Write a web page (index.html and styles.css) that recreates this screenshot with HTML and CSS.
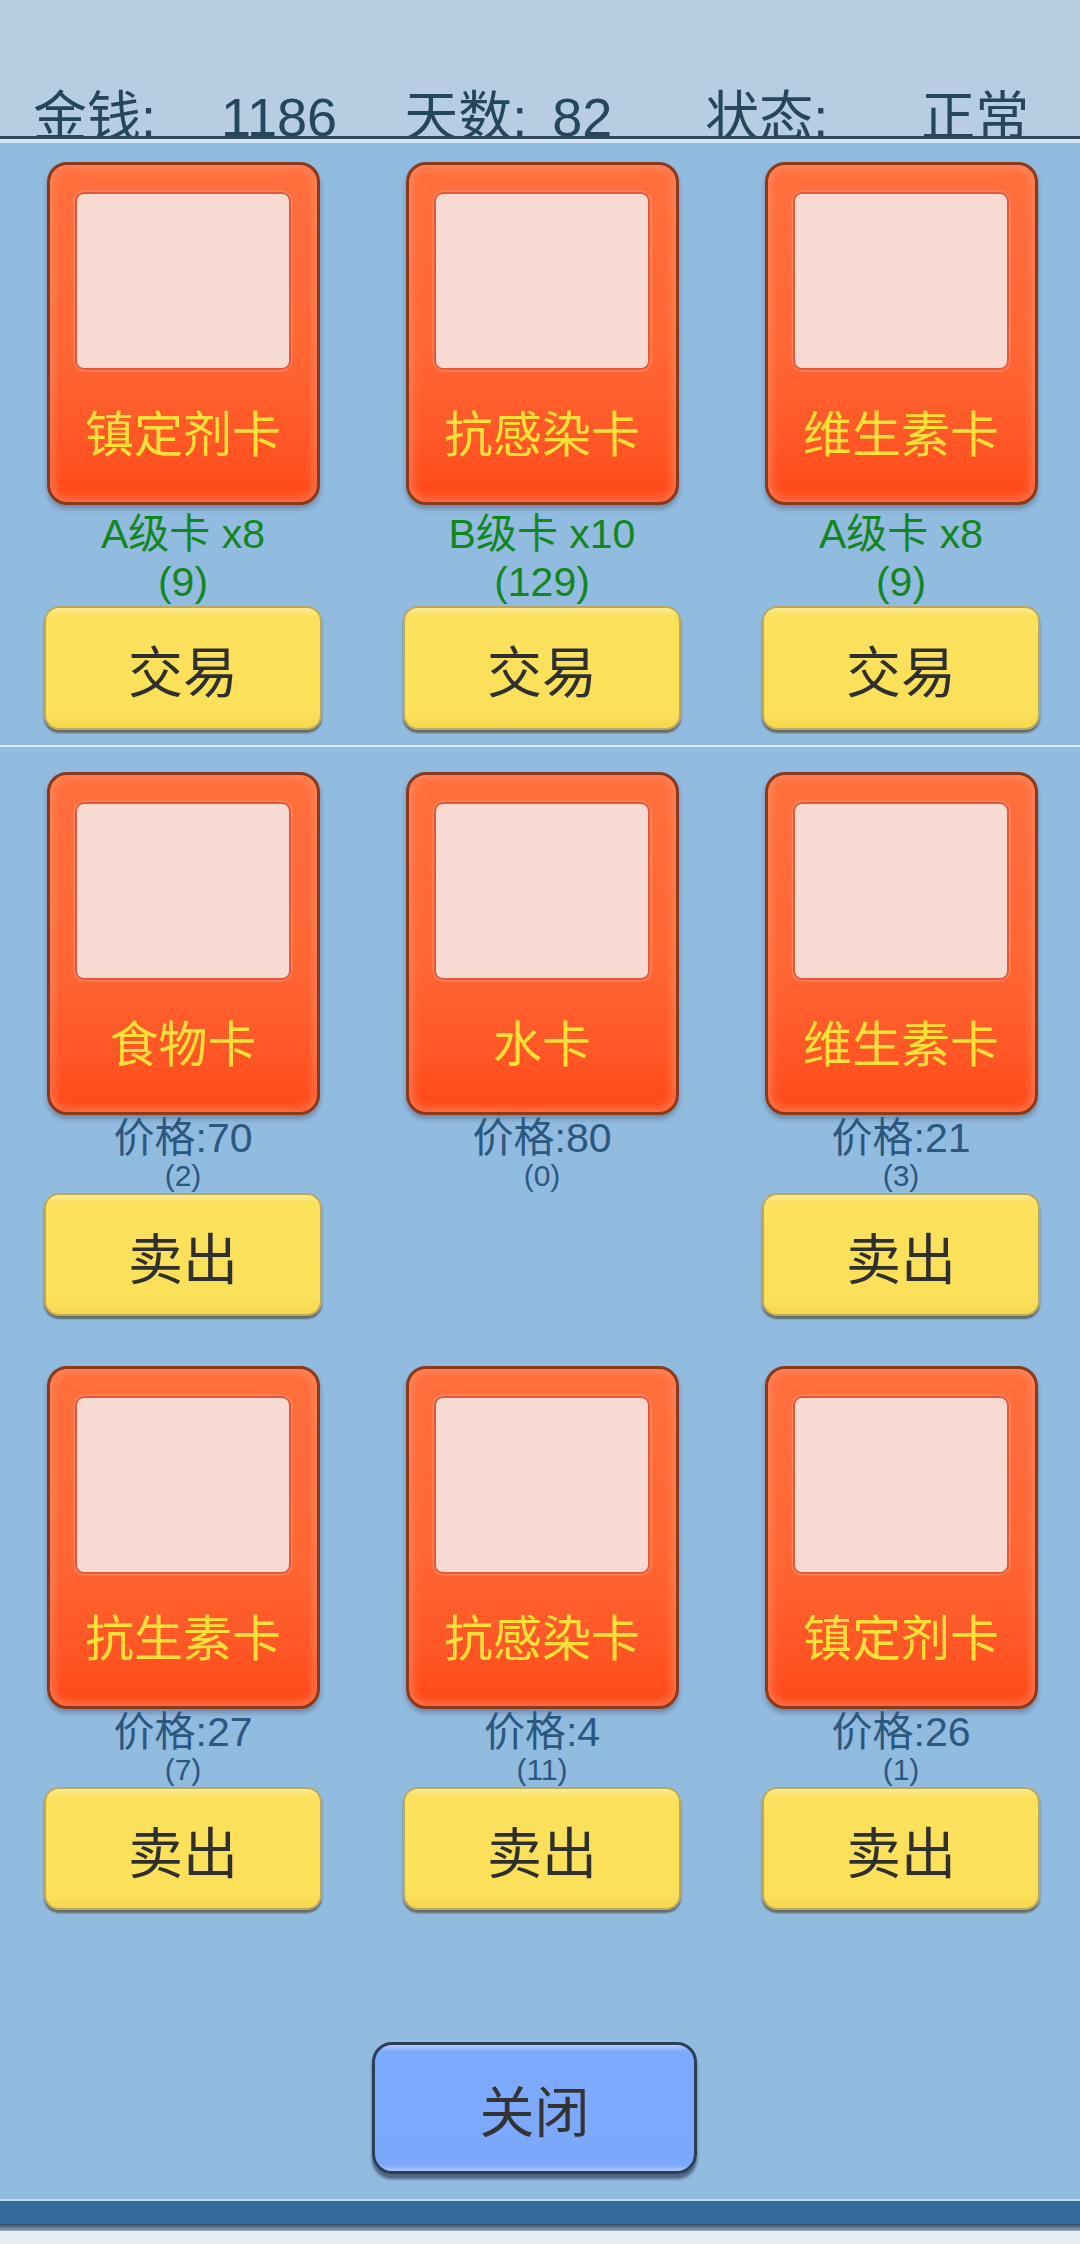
FILE: index.html
```html
<!DOCTYPE html>
<html lang="zh-CN">
<head>
<meta charset="utf-8">
<title>交易</title>
<link rel="stylesheet" href="styles.css">
</head>
<body>
<div class="screen">
  <header class="header">
    <div class="stats">
      <span class="s-money-label">金钱:</span>
      <span class="s-money">1186</span>
      <span class="s-day">天数:</span>
      <span class="s-day-val">82</span>
      <span class="s-state-label">状态:</span>
      <span class="s-state">正常</span>
    </div>
  </header>
  <div class="hline"></div>
  <div class="hlight"></div>

  <main class="main">
    <section class="row row-trade">
      <div class="col">
        <div class="card"><div class="pic"></div><div class="name">镇定剂卡</div></div>
        <div class="grade"><div>A级卡 x8</div><div>(9)</div></div>
        <button class="btn">交易</button>
      </div>
      <div class="col">
        <div class="card"><div class="pic"></div><div class="name">抗感染卡</div></div>
        <div class="grade"><div>B级卡 x10</div><div>(129)</div></div>
        <button class="btn">交易</button>
      </div>
      <div class="col">
        <div class="card"><div class="pic"></div><div class="name">维生素卡</div></div>
        <div class="grade"><div>A级卡 x8</div><div>(9)</div></div>
        <button class="btn">交易</button>
      </div>
    </section>

    <div class="divider"></div>

    <section class="row row-sell">
      <div class="col">
        <div class="card"><div class="pic"></div><div class="name">食物卡</div></div>
        <div class="price"><div class="p1">价格:70</div><div class="p2">(2)</div></div>
        <button class="btn">卖出</button>
      </div>
      <div class="col">
        <div class="card"><div class="pic"></div><div class="name">水卡</div></div>
        <div class="price"><div class="p1">价格:80</div><div class="p2">(0)</div></div>
        <button class="btn hidden">卖出</button>
      </div>
      <div class="col">
        <div class="card"><div class="pic"></div><div class="name">维生素卡</div></div>
        <div class="price"><div class="p1">价格:21</div><div class="p2">(3)</div></div>
        <button class="btn">卖出</button>
      </div>
    </section>

    <section class="row row-sell row-last">
      <div class="col">
        <div class="card"><div class="pic"></div><div class="name">抗生素卡</div></div>
        <div class="price"><div class="p1">价格:27</div><div class="p2">(7)</div></div>
        <button class="btn">卖出</button>
      </div>
      <div class="col">
        <div class="card"><div class="pic"></div><div class="name">抗感染卡</div></div>
        <div class="price"><div class="p1">价格:4</div><div class="p2">(11)</div></div>
        <button class="btn">卖出</button>
      </div>
      <div class="col">
        <div class="card"><div class="pic"></div><div class="name">镇定剂卡</div></div>
        <div class="price"><div class="p1">价格:26</div><div class="p2">(1)</div></div>
        <button class="btn">卖出</button>
      </div>
    </section>

    <div class="close-wrap">
      <button class="close">关闭</button>
    </div>
  </main>

  <footer class="footer">
    <div class="f-light"></div>
    <div class="f-bar"></div>
    <div class="f-shadow"></div>
    <div class="f-gray"></div>
  </footer>
</div>
</body>
</html>
```
FILE: styles.css
```css
* { box-sizing: border-box; }
html, body { margin: 0; padding: 0; }
body {
  width: 1080px;
  height: 2244px;
  overflow: hidden;
  font-family: "Liberation Sans", "Noto Sans CJK SC", sans-serif;
  background: #92bbe0;
}
.screen {
  width: 1080px;
  height: 2244px;
  display: flex;
  flex-direction: column;
}
.header {
  height: 136px;
  background: #b6cde2;
  overflow: hidden;
  display: flex;
  align-items: flex-end;
}
.stats {
  display: flex;
  font-size: 54px;
  line-height: 54px;
  color: #26465c;
  margin-bottom: -8px;
  padding-left: 33px;
  white-space: nowrap;
}
.s-money { margin-left: 65px; }
.s-day { margin-left: 67px; }
.s-day-val { margin-left: 25px; }
.s-state-label { margin-left: 93px; }
.s-state { margin-left: 93px; }
.hline { height: 3px; background: #2f485c; }
.hlight { height: 4px; background: #d4e6f5; }

.main {
  flex: 1;
  background: #92bbe0;
  display: flex;
  flex-direction: column;
}
.row {
  display: grid;
  grid-template-columns: repeat(3, 278px);
  column-gap: 81px;
  padding-left: 44px;
}
.row-trade { padding-top: 19px; }
.row-sell { padding-top: 25px; }
.row-last { padding-top: 50px; }
.col {
  display: flex;
  flex-direction: column;
  align-items: center;
}
.card {
  width: 273px;
  height: 343px;
  border: 3px solid #8a3a1c;
  border-radius: 20px;
  background: linear-gradient(#ff6f3d 0%, #ff6634 55%, #ff5726 82%, #ff4818 100%);
  box-shadow: inset 0 0 8px 4px rgba(255, 145, 105, 0.6), 0 4px 5px rgba(40, 30, 40, 0.3);
  padding-top: 27px;
  display: flex;
  flex-direction: column;
  align-items: center;
}
.pic {
  width: 216px;
  height: 178px;
  background: #f7dbd2;
  border: 2px solid #e2583a;
  border-radius: 9px;
  box-shadow: 0 0 3px rgba(255, 200, 175, 0.9);
}
.name {
  margin-top: 38px;
  font-size: 49px;
  line-height: 54px;
  color: #ffe03a;
  white-space: nowrap;
}
.grade {
  height: 101px;
  padding-top: 5px;
  font-size: 41px;
  line-height: 48px;
  color: #14861f;
  text-align: center;
  white-space: nowrap;
}
.price {
  height: 78px;
  padding-top: 3px;
  text-align: center;
  color: #2b587e;
  white-space: nowrap;
}
.p1 { font-size: 41px; line-height: 40px; }
.p2 { font-size: 30px; line-height: 35px; }
.btn {
  width: 278px;
  height: 124px;
  border: 2px solid #b9a860;
  border-radius: 15px;
  background: linear-gradient(#fdeb92 0%, #fbe15c 7%, #fbe05a 88%, #f6d84e 100%);
  box-shadow: 0 3px 2px rgba(70, 65, 40, 0.65);
  font-family: "Liberation Sans", "Noto Sans CJK SC", sans-serif;
  font-size: 55px;
  color: #2f2f2f;
  padding: 0;
}
.row-sell .btn { height: 123px; }
.btn.hidden { visibility: hidden; }
.divider {
  margin-top: 15px;
  height: 2px;
  background: #d8ebfa;
}
.close-wrap {
  padding-top: 132px;
  padding-left: 372px;
}
.close {
  width: 325px;
  height: 132px;
  border: 3px solid #2b3f56;
  border-radius: 20px;
  background: linear-gradient(#b4cdfc 0%, #7eaafc 5%, #7ca8fc 95%, #a9c6fb 100%);
  box-shadow: 0 5px 3px rgba(30, 45, 70, 0.6);
  font-family: "Liberation Sans", "Noto Sans CJK SC", sans-serif;
  font-size: 55px;
  color: #333333;
  padding: 0;
}
.footer { display: flex; flex-direction: column; }
.f-light { height: 2px; background: #c2dcf3; }
.f-bar { height: 23px; background: #346a9c; }
.f-shadow { height: 7px; background: linear-gradient(#2d4a66, #9aa8b6); }
.f-gray { height: 13px; background: #e7ecf1; }
```
